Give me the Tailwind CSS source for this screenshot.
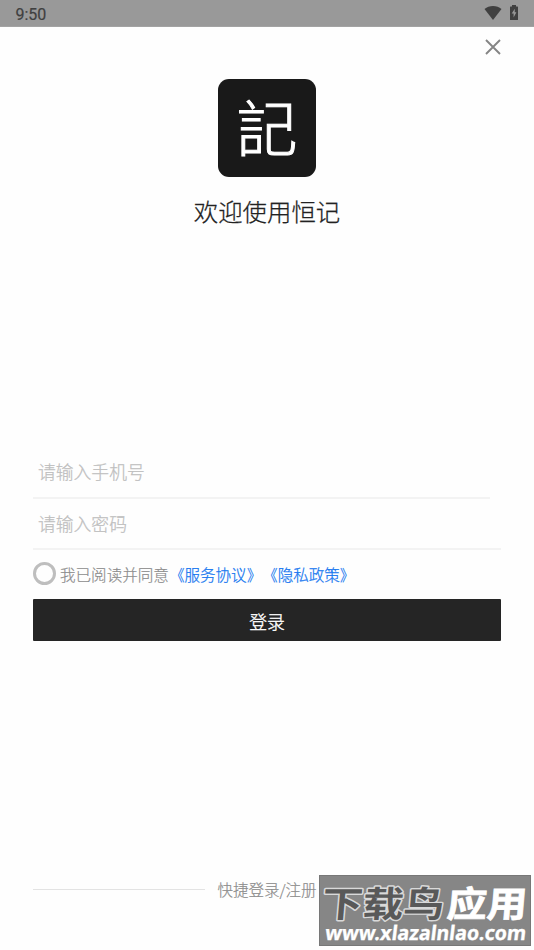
<!DOCTYPE html>
<html lang="zh-CN">
<head>
<meta charset="utf-8">
<title>恒记</title>
<script src="https://cdn.jsdelivr.net/npm/@tailwindcss/browser@4"></script>
</head>
<body class="bg-[#fefefe] font-['Noto_Sans_CJK_SC',sans-serif]">
<div class="relative w-[534px] h-[950px] overflow-hidden flex flex-col">
  <header class="h-[27px] shrink-0 bg-[#999] border-b border-[#a3a3a3] flex items-center justify-between pl-[15.5px] pr-[15px]">
    <span class="font-['Roboto',sans-serif] font-normal text-[16px] leading-none text-[#404040] pt-[3px] [-webkit-text-stroke:0.2px_#404040]">9:50</span>
    <span class="flex items-center gap-[7px]">
      <svg class="w-[18px] h-[14px]" viewBox="0 0 18 14"><path d="M9 14 0.5 3.1Q4 0 9 0t8.500 3.100Z" fill="#404040"/></svg>
      <svg class="w-[10px] h-[15px] -mt-px" viewBox="0 0 10 15"><path d="M3 0h4v1.500h1.500q.5 0 .5 .5V14.500q0 .5-.5 .5h-7q-.5 0-.5-.5V2q0-.5 .5-.5H3z" fill="#404040"/><path d="M5.800 3.800 2.700 8.600h1.900v3.900L7.400 7.300H5.700z" fill="#999"/></svg>
    </span>
  </header>
  <main class="flex flex-col px-[33px]">
    <div class="flex justify-end h-[52px] pt-[12px]">
      <svg class="w-4 h-4" viewBox="0 0 16 16" fill="none" stroke="#858585" stroke-width="1.9"><path d="M1 1 15 15M15 1 1 15"/></svg>
    </div>
    <div class="self-center w-[98px] h-[98px] rounded-[11px] bg-[#191919] text-white flex items-center justify-center font-['Noto_Sans_CJK_TC',sans-serif] text-[61px] leading-none font-light [-webkit-text-stroke:1px_white] pb-[5px]" lang="zh-TW">記</div>
    <h1 class="self-center mt-[16px] h-[36px] leading-[36px] text-[24.4px] text-[#222] font-light [-webkit-text-stroke:0.25px_#222]">欢迎使用恒记</h1>
    <form class="mt-[217px] flex flex-col">
      <div class="w-[457px] h-[53px] border-b-2 border-[#f3f3f3] pl-[5px] pt-[12px] text-[17.8px] leading-[27px] text-[#bebebe] font-light [-webkit-text-stroke:0.25px_#bebebe]">请输入手机号</div>
      <div class="h-[51px] border-b-2 border-[#f3f3f3] pl-[5px] pt-[11px] text-[17.8px] leading-[27px] text-[#bebebe] font-light [-webkit-text-stroke:0.25px_#bebebe]">请输入密码</div>
      <div class="h-[49px] flex items-center text-[15.55px] text-[#8c8c8c] font-light">
        <span class="w-[23px] h-[23px] rounded-full border-[3px] border-[#bebebe] mr-1 -mt-[2px]"></span>
        <span class="[-webkit-text-stroke:0.2px_#8c8c8c]">我已阅读并同意</span><span class="text-[#1677f0] [text-spacing-trim:space-all] [-webkit-text-stroke:0.25px_#1677f0]"><span class="inline-block scale-x-90 origin-right">《</span>服务协议<span class="inline-block scale-x-90 origin-left">》</span><span class="inline-block scale-x-90 origin-right">《</span>隐私政策<span class="inline-block scale-x-90 origin-left">》</span></span>
      </div>
      <div class="h-[42px] rounded-[1px] bg-[#252525] text-white text-[17.8px] flex items-center justify-center font-light [-webkit-text-stroke:0.35px_white] pt-[2px]">登录</div>
    </form>
    <div class="mt-[236px] h-[24px] flex items-center gap-[12px] text-[15.5px] leading-[24px] text-[#8c8c8c] font-light">
      <span class="h-px flex-1 bg-[#e3e3e3]"></span><span class="[-webkit-text-stroke:0.2px_#8c8c8c]">快捷登录/注册</span><span class="h-px flex-1 bg-[#e3e3e3]"></span>
    </div>
  </main>
  <div class="absolute left-[319px] top-[875px] w-[212px] h-[71px] bg-[#868686] border border-[#777]">
    <svg class="block w-[210px] h-[69px] overflow-visible" viewBox="320 876 210 69">
      <g font-family="Noto Sans CJK SC, sans-serif" font-weight="700" font-size="38.500">
        <text x="0" y="0" transform="translate(321 917) skewX(-5) scale(1.06 .93)" fill="#595959" stroke="#d9d9d9" stroke-width="3" stroke-linejoin="round" paint-order="stroke">下载鸟</text>
        <text x="0" y="0" transform="translate(446 917) skewX(-5) scale(1.04 .93)" fill="#fff" stroke="#fff" stroke-width=".8">应用</text>
      </g>
      <text x="0" y="0" transform="translate(324.500 939.500) skewX(-7)" font-family="Noto Sans, sans-serif" font-weight="700" font-size="20" textLength="201" lengthAdjust="spacingAndGlyphs" fill="#fff" stroke="#fff" stroke-width=".3">www.xlazalnlao.com</text>
    </svg>
  </div>
</div>
</body>
</html>
